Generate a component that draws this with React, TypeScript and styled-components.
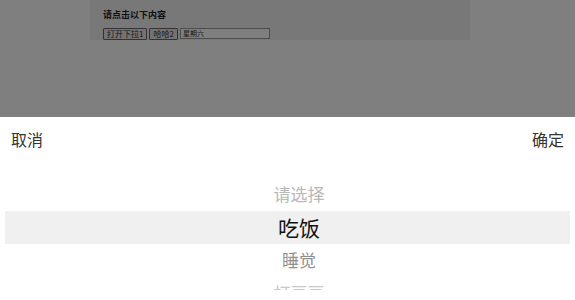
import React from "react";
import styled, { createGlobalStyle } from "styled-components";

const GlobalStyle = createGlobalStyle`
  body {
    margin: 0;
    background: #ffffff;
    font-family: "Noto Sans CJK SC", "Noto Sans", sans-serif;
  }
`;

const Page = styled.div`
  height: 300px;
  padding-left: 90px;
`;

const Card = styled.div`
  width: 380px;
  height: 40px;
  box-sizing: border-box;
  background: #f0f0f0;
  padding: 9px 13px 0;
`;

const Title = styled.div`
  font-size: 9px;
  font-weight: bold;
  color: #222;
  line-height: 12px;
`;

const Controls = styled.div`
  display: flex;
  gap: 2px;
  margin-top: 7px;
`;

const SmallButton = styled.button`
  height: 12px;
  padding: 0 3px;
  font-family: inherit;
  font-size: 8px;
  line-height: 10px;
  border: 1px solid #666;
  border-radius: 1px;
  background: #e6e6e6;
  color: #333;
`;

const SmallInput = styled.div`
  width: 90px;
  height: 11px;
  box-sizing: border-box;
  border: 1px solid #999;
  background: #fff;
  font-size: 7px;
  line-height: 9px;
  padding-left: 2px;
  color: #333;
`;

const Overlay = styled.div`
  position: fixed;
  inset: 0;
  background: rgba(0, 0, 0, 0.5);
`;

const Sheet = styled.div`
  position: fixed;
  left: 0;
  right: 0;
  bottom: 0;
  height: 183px;
  background: #fff;
`;

const Header = styled.div`
  height: 44px;
  display: flex;
  align-items: center;
  justify-content: space-between;
  padding: 0 11px;
  font-size: 16px;
  color: #333;
`;

const Wheel = styled.div`
  height: 129px;
  overflow: hidden;
  padding: 17px 5px 0;
  box-sizing: border-box;
`;

type Tone = "placeholder" | "active" | "near" | "far";

const Option = styled.div<{ $tone: Tone }>`
  height: 33px;
  line-height: 32px;
  text-align: center;
  padding-left: 23px;
  font-size: ${(p) => (p.$tone === "active" ? "21px" : "17px")};
  color: ${(p) =>
    p.$tone === "active"
      ? "#111"
      : p.$tone === "placeholder"
      ? "#b8b8b8"
      : p.$tone === "near"
      ? "#8f8f8f"
      : "#c8c8c8"};
  background: ${(p) => (p.$tone === "active" ? "#f0f0f0" : "transparent")};
`;

const options: { label: string; tone: Tone }[] = [
  { label: "请选择", tone: "placeholder" },
  { label: "吃饭", tone: "active" },
  { label: "睡觉", tone: "near" },
  { label: "打豆豆", tone: "far" },
];

export default function App() {
  return (
    <>
      <GlobalStyle />
      <Page>
        <Card>
          <Title>请点击以下内容</Title>
          <Controls>
            <SmallButton>打开下拉1</SmallButton>
            <SmallButton>哈哈2</SmallButton>
            <SmallInput>星期六</SmallInput>
          </Controls>
        </Card>
      </Page>
      <Overlay />
      <Sheet>
        <Header>
          <span>取消</span>
          <span>确定</span>
        </Header>
        <Wheel>
          {options.map((o) => (
            <Option key={o.label} $tone={o.tone}>
              {o.label}
            </Option>
          ))}
        </Wheel>
      </Sheet>
    </>
  );
}
